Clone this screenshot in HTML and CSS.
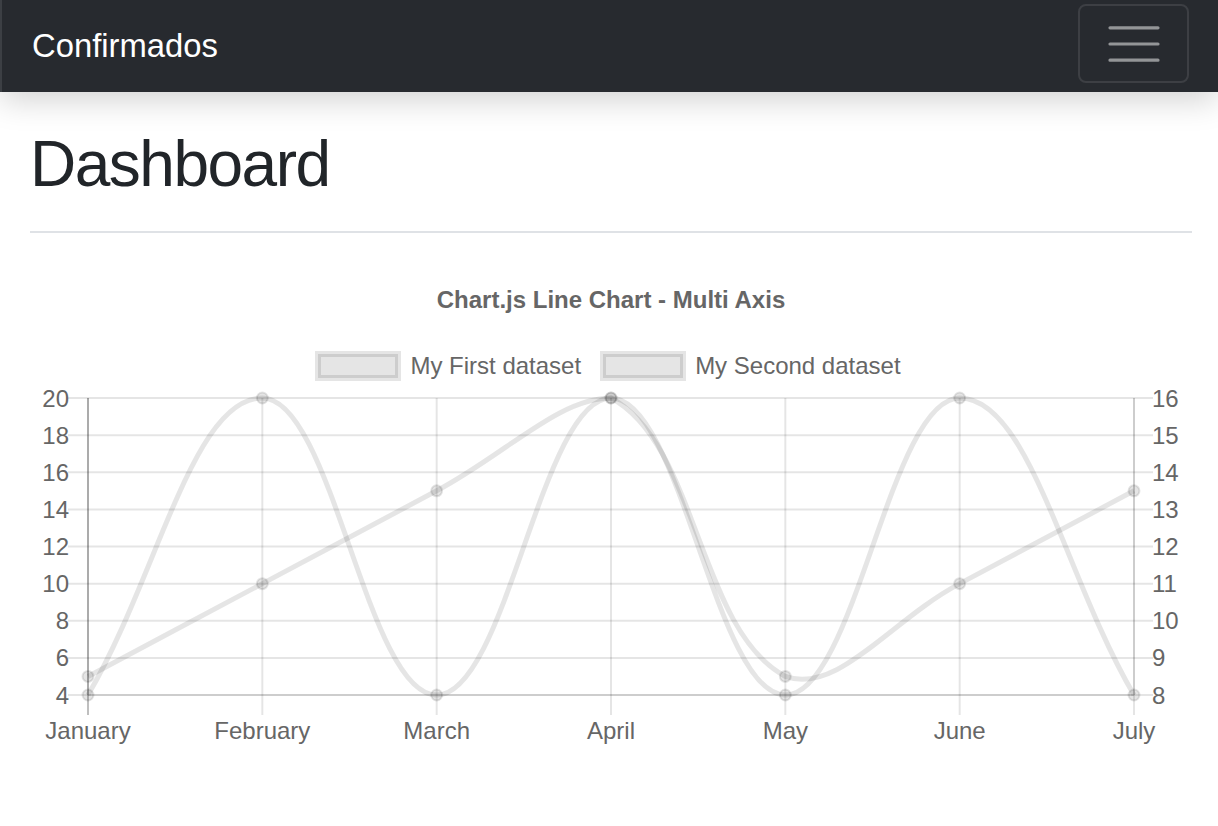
FILE: index.html
```html
<!DOCTYPE html>
<html lang="es">
<head>
<meta charset="utf-8">
<title>Dashboard</title>
<link rel="stylesheet" href="styles.css">
</head>
<body>
<nav class="navbar">
  <span class="brand">Confirmados</span>
  <button class="toggler" type="button" aria-label="Toggle navigation">
    <svg class="toggler-icon" viewBox="0 0 30 30" width="60" height="60">
      <path d="M3 6.9h24M3 15h24M3 23.1h24" stroke="rgba(255,255,255,0.5)" stroke-width="1.6" stroke-linecap="round" fill="none"/>
    </svg>
  </button>
</nav>
<main class="main">
  <h1 class="page-title">Dashboard</h1>
  <hr class="divider">
  <section class="chart">
    <div class="chart-title">Chart.js Line Chart - Multi Axis</div>
    <div class="legend">
      <div class="legend-item"><span class="legend-box"></span><span class="legend-label">My First dataset</span></div>
      <div class="legend-item"><span class="legend-box"></span><span class="legend-label">My Second dataset</span></div>
    </div>
    <svg class="plot" viewBox="30 382 1162 380" width="1162" height="380">
      <g stroke="rgba(0,0,0,0.1)" stroke-width="2" fill="none">
        <path d="M68 398H1153M68 435.125H1153M68 472.25H1153M68 509.375H1153M68 546.5H1153M68 583.625H1153M68 620.75H1153M68 657.875H1153M68 695H1153"/>
        <path d="M262.33 398V715M436.67 398V715M611 398V715M785.33 398V715M959.67 398V715M1134 398V715"/>
        <path d="M88 398V695M88 695H1134M1134 398V695"/>
      </g>
      <path d="M88 398V715" stroke="rgba(0,0,0,0.25)" stroke-width="2" fill="none"/>
      <g class="ticks-left" text-anchor="end">
        <text x="69" y="406.5">20</text>
        <text x="69" y="443.6">18</text>
        <text x="69" y="480.8">16</text>
        <text x="69" y="517.9">14</text>
        <text x="69" y="555">12</text>
        <text x="69" y="592.1">10</text>
        <text x="69" y="629.3">8</text>
        <text x="69" y="666.4">6</text>
        <text x="69" y="703.5">4</text>
      </g>
      <g class="ticks-right" text-anchor="start">
        <text x="1152" y="406.5">16</text>
        <text x="1152" y="443.6">15</text>
        <text x="1152" y="480.8">14</text>
        <text x="1152" y="517.9">13</text>
        <text x="1152" y="555">12</text>
        <text x="1152" y="592.1">11</text>
        <text x="1152" y="629.3">10</text>
        <text x="1152" y="666.4">9</text>
        <text x="1152" y="703.5">8</text>
      </g>
      <g class="ticks-x" text-anchor="middle">
        <text x="88" y="739">January</text>
        <text x="262.33" y="739">February</text>
        <text x="436.67" y="739">March</text>
        <text x="611" y="739">April</text>
        <text x="785.33" y="739">May</text>
        <text x="959.67" y="739">June</text>
        <text x="1134" y="739">July</text>
      </g>
      <g class="series">
        <path class="line" d="M88,676.44 C157.73,639.32 192.6,620.76 262.33,583.63 C332.07,546.5 366.93,527.94 436.67,490.81 C506.4,453.69 558.63,398 611,398 C698.1,444.37 698.23,630.07 785.33,676.44 C837.7,695 890,620.76 959.67,583.63 C1029.4,546.5 1064.27,527.94 1134,490.81"/>
        <circle cx="88" cy="676.44" r="5.5"/>
        <circle cx="262.33" cy="583.63" r="5.5"/>
        <circle cx="436.67" cy="490.81" r="5.5"/>
        <circle cx="611" cy="398" r="5.5"/>
        <circle cx="785.33" cy="676.44" r="5.5"/>
        <circle cx="959.67" cy="583.63" r="5.5"/>
        <circle cx="1134" cy="490.81" r="5.5"/>
      </g>
      <g class="series">
        <path class="line" d="M88,695 C157.73,576.2 192.6,398 262.33,398 C332.07,398 366.93,695 436.67,695 C506.4,695 541.27,398 611,398 C680.73,398 715.6,695 785.33,695 C855.07,695 889.93,398 959.67,398 C1029.4,398 1064.27,576.2 1134,695"/>
        <circle cx="88" cy="695" r="5.5"/>
        <circle cx="262.33" cy="398" r="5.5"/>
        <circle cx="436.67" cy="695" r="5.5"/>
        <circle cx="611" cy="398" r="5.5"/>
        <circle cx="785.33" cy="695" r="5.5"/>
        <circle cx="959.67" cy="398" r="5.5"/>
        <circle cx="1134" cy="695" r="5.5"/>
      </g>
    </svg>
  </section>
</main>
</body>
</html>
```

FILE: styles.css
```css
html, body {
  margin: 0;
  padding: 0;
  background: #ffffff;
}

body {
  font-family: "Liberation Sans", Arial, Helvetica, sans-serif;
  color: #212529;
}

.navbar {
  box-sizing: border-box;
  height: 92px;
  background: #272a2f;
  border-left: 2px solid #3c3f44;
  display: flex;
  align-items: center;
  justify-content: space-between;
  padding: 0 29px 0 30px;
  box-shadow: 0 8px 32px rgba(0, 0, 0, 0.18);
}

.brand {
  color: #ffffff;
  font-size: 32.8px;
  line-height: 39px;
  margin-bottom: 2px;
}

.toggler {
  box-sizing: border-box;
  width: 111px;
  height: 79px;
  margin-bottom: 5px;
  padding: 0;
  background: transparent;
  border: 2px solid rgba(255, 255, 255, 0.1);
  border-radius: 8px;
  display: flex;
  align-items: center;
  justify-content: center;
}

.toggler-icon {
  display: block;
}

.main {
  padding: 0 26px 0 30px;
}

.page-title {
  margin: 34px 0 0 0;
  font-size: 64px;
  font-weight: 400;
  line-height: 1.2;
  letter-spacing: -1.5px;
  color: #212529;
}

.divider {
  margin: 28px 0 0;
  border: 0;
  height: 2px;
  background: #dfe2e6;
}

.chart {
  display: flex;
  flex-direction: column;
}

.chart-title {
  margin-top: 52px;
  text-align: center;
  font-size: 24px;
  font-weight: 700;
  line-height: 29px;
  color: #666666;
}

.legend {
  margin-top: 37px;
  height: 30px;
  display: flex;
  justify-content: center;
  gap: 19px;
  padding-right: 6px;
}

.legend-item {
  display: flex;
  align-items: center;
  gap: 9px;
}

.legend-box {
  box-sizing: border-box;
  width: 86px;
  height: 30px;
  border: 3px solid rgba(0, 0, 0, 0.1);
  background: rgba(0, 0, 0, 0.1);
  background-clip: padding-box;
  box-shadow: inset 0 0 0 3px rgba(0, 0, 0, 0.1);
}

.legend-label {
  font-size: 24px;
  line-height: 30px;
  color: #666666;
}

.plot {
  display: block;
  margin-top: 1px;
  width: 1162px;
  height: 380px;
  overflow: visible;
}

.plot text {
  font-family: "Liberation Sans", Arial, Helvetica, sans-serif;
  font-size: 24px;
  fill: #666666;
}

.series .line {
  fill: none;
  stroke: rgba(0, 0, 0, 0.1);
  stroke-width: 5;
}

.series circle {
  fill: rgba(0, 0, 0, 0.1);
  stroke: rgba(0, 0, 0, 0.1);
  stroke-width: 2;
}
```
